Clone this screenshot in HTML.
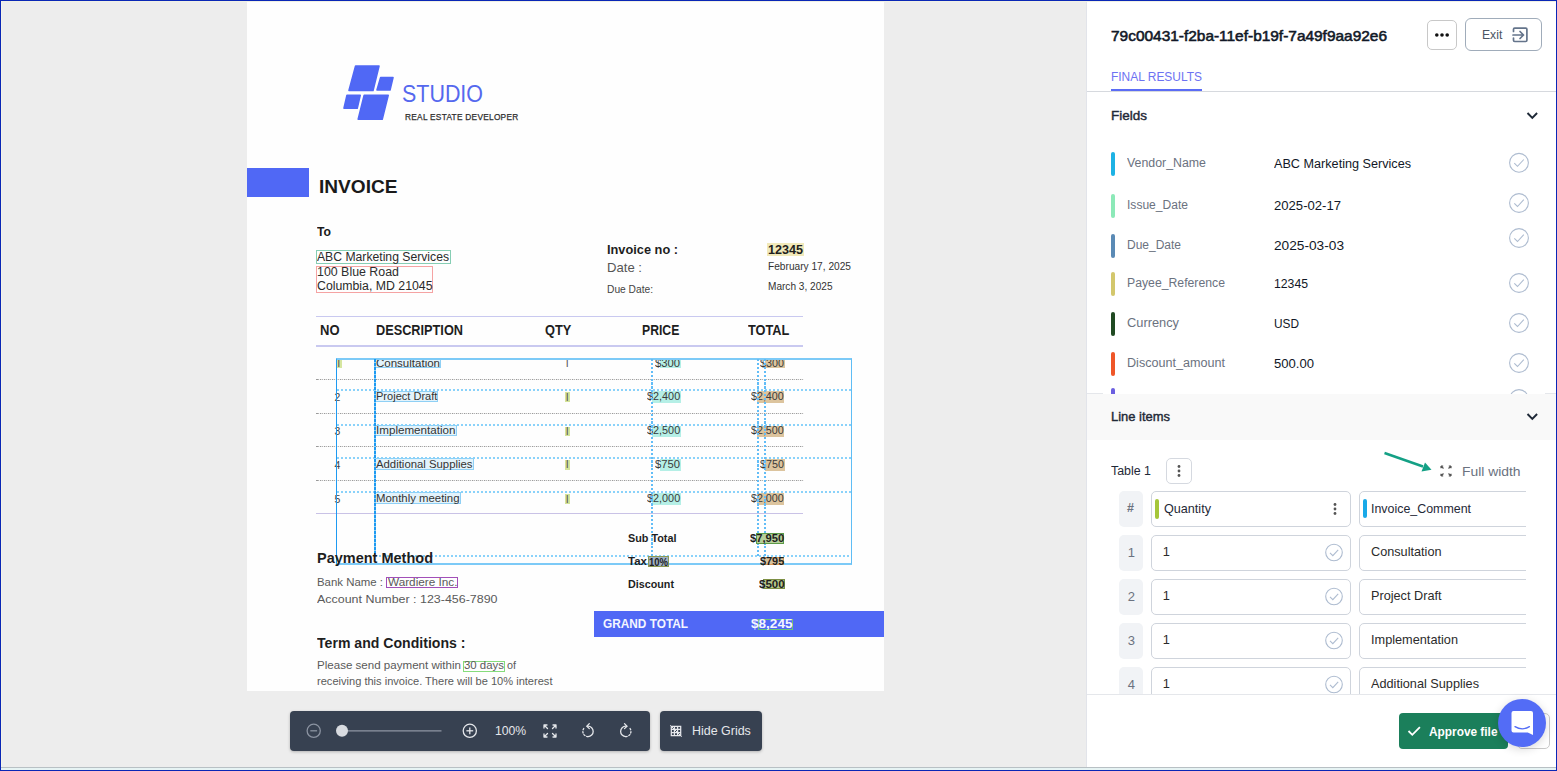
<!DOCTYPE html>
<html><head><meta charset="utf-8"><style>
html,body{margin:0;padding:0;width:1557px;height:771px;overflow:hidden;background:#ededed;font-family:"Liberation Sans",sans-serif;}
.t{position:absolute;white-space:nowrap;line-height:1;}
.r{position:absolute;box-sizing:border-box;}
svg{position:absolute;overflow:visible;}
</style></head><body>
<div class="r" style="left:247px;top:2px;width:637px;height:689px;background:#fefefe"></div>
<svg style="left:0;top:0" width="1557" height="771"><g fill="#5068f5" stroke="#5068f5" stroke-width="1.6" stroke-linejoin="round">
<polygon points="355.6,66 379,66 373,90.5 349,90.5"/>
<polygon points="380.6,77.6 393,77.6 390,90 377,90"/>
<polygon points="347,95.2 360.2,95.2 357.2,108.2 344,108.2"/>
<polygon points="364.2,95.2 388.2,95.2 382.2,119.2 358.2,119.2"/>
</g></svg>
<div id="t0" class="t" style="left:402px;top:81.68px;font-size:24px;color:#5568ee;font-weight:400;transform:scaleX(0.8933);transform-origin:0 0;">STUDIO</div>
<div id="t1" class="t" style="left:404.6px;top:113.05px;font-size:8.8px;color:#2e2e2e;font-weight:400;transform:scaleX(0.9417);transform-origin:0 0;letter-spacing:0.3px;-webkit-text-stroke:0.25px #2e2e2e;">REAL ESTATE DEVELOPER</div>
<div class="r" style="left:247px;top:168px;width:62px;height:29px;background:#5068f5"></div>
<div id="t2" class="t" style="left:319px;top:177.74px;font-size:18.5px;color:#1a1a1a;font-weight:700;transform:scaleX(1.0318);transform-origin:0 0;">INVOICE</div>
<div id="t3" class="t" style="left:317px;top:224.79px;font-size:13px;color:#1a1a1a;font-weight:700;transform:scaleX(0.9382);transform-origin:0 0;">To</div>
<div class="r" style="left:316px;top:250px;width:135px;height:14px;border:1.3px solid #86ceb4"></div>
<div id="t4" class="t" style="left:317px;top:250.59px;font-size:12.3px;color:#2a2a2a;font-weight:400;transform:scaleX(0.9905);transform-origin:0 0;">ABC Marketing Services</div>
<div class="r" style="left:316px;top:266px;width:117px;height:27px;border:1.3px solid #f5a3a3"></div>
<div id="t5" class="t" style="left:317px;top:265.79px;font-size:12.3px;color:#2e2e2e;font-weight:400;transform:scaleX(1.0079);transform-origin:0 0;">100 Blue Road</div>
<div id="t6" class="t" style="left:317px;top:279.59px;font-size:12.3px;color:#2a2a2a;font-weight:400;transform:scaleX(0.9999);transform-origin:0 0;">Columbia, MD 21045</div>
<div id="t7" class="t" style="left:607.2px;top:242.99px;font-size:13px;color:#1e1e1e;font-weight:700;transform:scaleX(0.9829);transform-origin:0 0;">Invoice no :</div>
<div class="r" style="left:767px;top:243px;width:36.5px;height:12.5px;background:#f1e9b9"></div>
<div id="t8" class="t" style="left:767.7px;top:243.84px;font-size:12px;color:#1e1e1e;font-weight:700;transform:scaleX(1.0487);transform-origin:0 0;">12345</div>
<div id="t9" class="t" style="left:607.2px;top:261.49px;font-size:13px;color:#555;font-weight:400;transform:scaleX(1.0090);transform-origin:0 0;">Date :</div>
<div id="t10" class="t" style="left:767.7px;top:260.92px;font-size:11.2px;color:#333;font-weight:400;transform:scaleX(0.9077);transform-origin:0 0;">February 17, 2025</div>
<div id="t11" class="t" style="left:607.2px;top:284.19px;font-size:11px;color:#444;font-weight:400;transform:scaleX(0.9287);transform-origin:0 0;">Due Date:</div>
<div id="t12" class="t" style="left:767.7px;top:280.92px;font-size:11.2px;color:#333;font-weight:400;transform:scaleX(0.9017);transform-origin:0 0;">March 3, 2025</div>
<div class="r" style="left:316px;top:315.5px;width:487px;height:1.6px;background:#c9c9f0"></div>
<div class="r" style="left:316px;top:345.2px;width:487px;height:1.6px;background:#c9c9f0"></div>
<div id="t13" class="t" style="left:320.4px;top:323.35px;font-size:14px;color:#1e1e1e;font-weight:700;transform:scaleX(0.9286);transform-origin:0 0;">NO</div>
<div id="t14" class="t" style="left:375.5px;top:323.35px;font-size:14px;color:#1e1e1e;font-weight:700;transform:scaleX(0.9092);transform-origin:0 0;">DESCRIPTION</div>
<div id="t15" class="t" style="left:544.7px;top:323.35px;font-size:14px;color:#1e1e1e;font-weight:700;transform:scaleX(0.9138);transform-origin:0 0;">QTY</div>
<div id="t16" class="t" style="left:642.3px;top:323.35px;font-size:14px;color:#1e1e1e;font-weight:700;transform:scaleX(0.8716);transform-origin:0 0;">PRICE</div>
<div id="t17" class="t" style="left:748.3px;top:323.35px;font-size:14px;color:#1e1e1e;font-weight:700;transform:scaleX(0.9124);transform-origin:0 0;">TOTAL</div>
<div class="r" style="left:316px;top:379px;width:488px;height:1.4px;background:repeating-linear-gradient(90deg,#9a9a9a 0 1.5px,#e0e0e0 1.5px 2.5px,#b4b4b4 2.5px 3px,#f4f4f4 3px 4px)"></div>
<div class="r" style="left:316px;top:413px;width:488px;height:1.4px;background:repeating-linear-gradient(90deg,#9a9a9a 0 1.5px,#e0e0e0 1.5px 2.5px,#b4b4b4 2.5px 3px,#f4f4f4 3px 4px)"></div>
<div class="r" style="left:316px;top:446px;width:488px;height:1.4px;background:repeating-linear-gradient(90deg,#9a9a9a 0 1.5px,#e0e0e0 1.5px 2.5px,#b4b4b4 2.5px 3px,#f4f4f4 3px 4px)"></div>
<div class="r" style="left:316px;top:479.7px;width:488px;height:1.4px;background:repeating-linear-gradient(90deg,#9a9a9a 0 1.5px,#e0e0e0 1.5px 2.5px,#b4b4b4 2.5px 3px,#f4f4f4 3px 4px)"></div>
<div class="r" style="left:316px;top:512.8px;width:487px;height:1.6px;background:#c9c2e6"></div>
<div class="r" style="left:375px;top:358.4px;width:66px;height:9.600000000000023px;background:#e3f3fb;border:1.5px solid #8fd0f5"></div>
<div id="t18" class="t" style="left:376px;top:357.66px;font-size:11.5px;color:#333;font-weight:400;transform:scaleX(1.0010);transform-origin:0 0;">Consultation</div>
<div class="r" style="left:337px;top:359.9px;width:4.5px;height:8.100000000000023px;background:#d6e6a0"></div>
<div id="t19" class="t" style="left:337.6px;top:358.09px;font-size:11px;color:#555;font-weight:400;">l</div>
<div id="t20" class="t" style="left:566px;top:358.09px;font-size:11px;color:#555;font-weight:400;">l</div>
<div class="r" style="left:660.4px;top:358.9px;width:20.600000000000023px;height:9.600000000000023px;background:#b5efe6"></div>
<div id="t21" class="t" style="left:655px;top:357.66px;font-size:11.5px;color:#3a3a3a;font-weight:400;transform:scaleX(0.9768);transform-origin:0 0;">$300</div>
<div class="r" style="left:765px;top:358.9px;width:19.5px;height:9.600000000000023px;background:#dcc49e"></div>
<div id="t22" class="t" style="left:759.6px;top:357.66px;font-size:11.5px;color:#3a3a3a;font-weight:400;transform:scaleX(0.9338);transform-origin:0 0;">$300</div>
<div class="r" style="left:375px;top:390.8px;width:63.39999999999998px;height:11.699999999999989px;background:#e3f3fb;border:1.5px solid #8fd0f5"></div>
<div id="t23" class="t" style="left:376px;top:391.46px;font-size:11.5px;color:#333;font-weight:400;transform:scaleX(0.9605);transform-origin:0 0;">Project Draft</div>
<div id="t24" class="t" style="left:334.5px;top:392.31px;font-size:10.5px;color:#444;font-weight:400;">2</div>
<div class="r" style="left:565px;top:392.3px;width:4.5px;height:10.199999999999989px;background:#d3e39a"></div>
<div id="t25" class="t" style="left:566px;top:391.89px;font-size:11px;color:#555;font-weight:400;">l</div>
<div class="r" style="left:651.6px;top:391.3px;width:29.399999999999977px;height:11.699999999999989px;background:#b5efe6"></div>
<div id="t26" class="t" style="left:646.8px;top:391.46px;font-size:11.5px;color:#3a3a3a;font-weight:400;transform:scaleX(0.9435);transform-origin:0 0;">$2,400</div>
<div class="r" style="left:757.4px;top:391.3px;width:27.100000000000023px;height:11.699999999999989px;background:#dcc49e"></div>
<div id="t27" class="t" style="left:750.8px;top:391.46px;font-size:11.5px;color:#3a3a3a;font-weight:400;transform:scaleX(0.9293);transform-origin:0 0;">$2,400</div>
<div class="r" style="left:375px;top:425.0px;width:81.5px;height:11.399999999999977px;background:#e3f3fb;border:1.5px solid #8fd0f5"></div>
<div id="t28" class="t" style="left:376px;top:425.36px;font-size:11.5px;color:#333;font-weight:400;transform:scaleX(1.0111);transform-origin:0 0;">Implementation</div>
<div id="t29" class="t" style="left:334.5px;top:426.21px;font-size:10.5px;color:#444;font-weight:400;">3</div>
<div class="r" style="left:565px;top:426.5px;width:4.5px;height:9.899999999999977px;background:#d3e39a"></div>
<div id="t30" class="t" style="left:566px;top:425.79px;font-size:11px;color:#555;font-weight:400;">l</div>
<div class="r" style="left:651.6px;top:425.5px;width:29.399999999999977px;height:11.399999999999977px;background:#b5efe6"></div>
<div id="t31" class="t" style="left:646.8px;top:425.36px;font-size:11.5px;color:#3a3a3a;font-weight:400;transform:scaleX(0.9435);transform-origin:0 0;">$2,500</div>
<div class="r" style="left:757.4px;top:425.5px;width:27.100000000000023px;height:11.399999999999977px;background:#dcc49e"></div>
<div id="t32" class="t" style="left:750.8px;top:425.36px;font-size:11.5px;color:#3a3a3a;font-weight:400;transform:scaleX(0.9293);transform-origin:0 0;">$2,500</div>
<div class="r" style="left:375px;top:458.0px;width:98.5px;height:12.0px;background:#e3f3fb;border:1.5px solid #8fd0f5"></div>
<div id="t33" class="t" style="left:376px;top:458.96px;font-size:11.5px;color:#333;font-weight:400;transform:scaleX(0.9864);transform-origin:0 0;">Additional Supplies</div>
<div id="t34" class="t" style="left:334.5px;top:459.81px;font-size:10.5px;color:#444;font-weight:400;">4</div>
<div class="r" style="left:565px;top:459.5px;width:4.5px;height:10.5px;background:#d3e39a"></div>
<div id="t35" class="t" style="left:566px;top:459.39px;font-size:11px;color:#555;font-weight:400;">l</div>
<div class="r" style="left:660.4px;top:458.5px;width:20.600000000000023px;height:12.0px;background:#b5efe6"></div>
<div id="t36" class="t" style="left:655px;top:458.96px;font-size:11.5px;color:#3a3a3a;font-weight:400;transform:scaleX(0.9768);transform-origin:0 0;">$750</div>
<div class="r" style="left:765px;top:458.5px;width:19.5px;height:12.0px;background:#dcc49e"></div>
<div id="t37" class="t" style="left:759.6px;top:458.96px;font-size:11.5px;color:#3a3a3a;font-weight:400;transform:scaleX(0.9338);transform-origin:0 0;">$750</div>
<div class="r" style="left:375px;top:492.2px;width:85.5px;height:12.100000000000023px;background:#e3f3fb;border:1.5px solid #8fd0f5"></div>
<div id="t38" class="t" style="left:376px;top:493.26px;font-size:11.5px;color:#333;font-weight:400;transform:scaleX(0.9896);transform-origin:0 0;">Monthly meeting</div>
<div id="t39" class="t" style="left:334.5px;top:494.11px;font-size:10.5px;color:#444;font-weight:400;">5</div>
<div class="r" style="left:565px;top:493.7px;width:4.5px;height:10.600000000000023px;background:#d3e39a"></div>
<div id="t40" class="t" style="left:566px;top:493.69px;font-size:11px;color:#555;font-weight:400;">l</div>
<div class="r" style="left:651.6px;top:492.7px;width:29.399999999999977px;height:12.100000000000023px;background:#b5efe6"></div>
<div id="t41" class="t" style="left:646.8px;top:493.26px;font-size:11.5px;color:#3a3a3a;font-weight:400;transform:scaleX(0.9435);transform-origin:0 0;">$2,000</div>
<div class="r" style="left:757.4px;top:492.7px;width:27.100000000000023px;height:12.100000000000023px;background:#dcc49e"></div>
<div id="t42" class="t" style="left:750.8px;top:493.26px;font-size:11.5px;color:#3a3a3a;font-weight:400;transform:scaleX(0.9293);transform-origin:0 0;">$2,000</div>
<div class="r" style="left:336px;top:358px;width:515.5px;height:207.3px;border-top:2px solid #7ccaf7;border-left:1.3px solid #1e9af2;border-right:1.5px solid #5fbdf5;border-bottom:2px solid #7ccaf7"></div>
<div class="r" style="left:337px;top:389px;width:514px;height:2px;background:repeating-linear-gradient(90deg,#8ad2fa 0 2px,transparent 2px 4px)"></div>
<div class="r" style="left:337px;top:424px;width:514px;height:2px;background:repeating-linear-gradient(90deg,#8ad2fa 0 2px,transparent 2px 4px)"></div>
<div class="r" style="left:337px;top:457px;width:514px;height:2px;background:repeating-linear-gradient(90deg,#8ad2fa 0 2px,transparent 2px 4px)"></div>
<div class="r" style="left:337px;top:491px;width:514px;height:2px;background:repeating-linear-gradient(90deg,#8ad2fa 0 2px,transparent 2px 4px)"></div>
<div class="r" style="left:374.5px;top:555px;width:476.5px;height:2px;background:repeating-linear-gradient(90deg,#8ad2fa 0 2px,transparent 2px 4px)"></div>
<div class="r" style="left:374px;top:359px;width:1.5px;height:197px;background:repeating-linear-gradient(180deg,#1e9af2 0 3px,#8fd0f5 3px 4px)"></div>
<div class="r" style="left:651.2px;top:359px;width:1.5px;height:197px;background:repeating-linear-gradient(180deg,#62bdf7 0 2.2px,transparent 2.2px 3.9px)"></div>
<div class="r" style="left:757px;top:359px;width:1.5px;height:197px;background:repeating-linear-gradient(180deg,#62bdf7 0 2.2px,transparent 2.2px 3.9px)"></div>
<div class="r" style="left:764.3px;top:359px;width:1.5px;height:197px;background:repeating-linear-gradient(180deg,#62bdf7 0 2.2px,transparent 2.2px 3.9px)"></div>
<div id="t43" class="t" style="left:628px;top:533.23px;font-size:11.3px;color:#1e1e1e;font-weight:700;transform:scaleX(0.9580);transform-origin:0 0;">Sub Total</div>
<div class="r" style="left:756.4px;top:533px;width:28px;height:10.5px;background:#b6cf9a;border:1px solid #5d9a48"></div>
<div id="t44" class="t" style="left:749.9px;top:533.23px;font-size:11.3px;color:#1e1e1e;font-weight:700;transform:scaleX(0.9924);transform-origin:0 0;">$7,950</div>
<div id="t45" class="t" style="left:628px;top:556.03px;font-size:11.3px;color:#1e1e1e;font-weight:700;transform:scaleX(1.0193);transform-origin:0 0;">Tax</div>
<div class="r" style="left:647.5px;top:556px;width:21.5px;height:10.5px;background:#9fb2c5;border:1px solid #8c9a55"></div>
<div id="t46" class="t" style="left:648.5px;top:556.71px;font-size:10.5px;color:#1e1e1e;font-weight:700;transform:scaleX(0.9041);transform-origin:0 0;">10%</div>
<div class="r" style="left:764.3px;top:556.8px;width:20.2px;height:8.6px;background:#d9c29c;border:1px solid #d99a55"></div>
<div id="t47" class="t" style="left:759.8px;top:556.03px;font-size:11.3px;color:#1e1e1e;font-weight:700;transform:scaleX(0.9626);transform-origin:0 0;">$795</div>
<div id="t48" class="t" style="left:628px;top:578.93px;font-size:11.3px;color:#1e1e1e;font-weight:700;transform:scaleX(0.9518);transform-origin:0 0;">Discount</div>
<div class="r" style="left:762.5px;top:578.5px;width:22px;height:10.5px;background:#b9c98a;border:1px solid #7d8f44"></div>
<div id="t49" class="t" style="left:758.5px;top:578.93px;font-size:11.3px;color:#1e1e1e;font-weight:700;transform:scaleX(1.0222);transform-origin:0 0;">$500</div>
<div class="r" style="left:593.5px;top:611px;width:290.5px;height:25.7px;background:#5068f5"></div>
<div id="t50" class="t" style="left:603.3px;top:618.32px;font-size:12.5px;color:#f4f6ff;font-weight:700;transform:scaleX(0.9464);transform-origin:0 0;">GRAND TOTAL</div>
<div class="r" style="left:757.5px;top:619px;width:35px;height:11px;border:1px solid #69c27a"></div>
<div id="t51" class="t" style="left:751.2px;top:618.32px;font-size:12.5px;color:#f4f6ff;font-weight:700;transform:scaleX(1.0854);transform-origin:0 0;">$8,245</div>
<div id="t52" class="t" style="left:316.9px;top:551.49px;font-size:14.3px;color:#1e1e1e;font-weight:700;transform:scaleX(1.0141);transform-origin:0 0;">Payment Method</div>
<div id="t53" class="t" style="left:316.9px;top:576.66px;font-size:11.5px;color:#5a5a5a;font-weight:400;transform:scaleX(0.9927);transform-origin:0 0;">Bank Name :</div>
<div class="r" style="left:386.4px;top:577px;width:72px;height:10.5px;border:1px solid #a24fb8"></div>
<div id="t54" class="t" style="left:387.5px;top:576.66px;font-size:11.5px;color:#5a5a5a;font-weight:400;transform:scaleX(1.0225);transform-origin:0 0;">Wardiere Inc.</div>
<div id="t55" class="t" style="left:316.9px;top:593.56px;font-size:11.5px;color:#5a5a5a;font-weight:400;transform:scaleX(1.0817);transform-origin:0 0;">Account Number : 123-456-7890</div>
<div id="t56" class="t" style="left:316.9px;top:635.89px;font-size:14.3px;color:#1e1e1e;font-weight:700;transform:scaleX(0.9857);transform-origin:0 0;">Term and Conditions :</div>
<div id="t57" class="t" style="left:316.9px;top:660.06px;font-size:10.8px;color:#5a5a5a;font-weight:400;transform:scaleX(1.0710);transform-origin:0 0;">Please send payment within</div>
<div class="r" style="left:463px;top:661px;width:42px;height:11px;border:1px solid #86dc7c"></div>
<div id="t58" class="t" style="left:464px;top:660.06px;font-size:10.8px;color:#5a5a5a;font-weight:400;transform:scaleX(1.0574);transform-origin:0 0;">30 days</div>
<div id="t59" class="t" style="left:506.5px;top:660.06px;font-size:10.8px;color:#5a5a5a;font-weight:400;transform:scaleX(0.9983);transform-origin:0 0;">of</div>
<div id="t60" class="t" style="left:316.9px;top:675.66px;font-size:10.8px;color:#5a5a5a;font-weight:400;transform:scaleX(1.0254);transform-origin:0 0;">receiving this invoice. There will be 10% interest</div>
<div class="r" style="left:290px;top:711px;width:360px;height:39.5px;background:#374151;border-radius:4px;box-shadow:0 1px 3px rgba(0,0,0,0.25)"></div>
<div class="r" style="left:660px;top:711px;width:102px;height:39.5px;background:#374151;border-radius:4px;box-shadow:0 1px 3px rgba(0,0,0,0.25)"></div>
<svg style="left:0;top:0" width="1557" height="771" fill="none">
<circle cx="313.7" cy="730.8" r="6.6" stroke="#8b93a1" stroke-width="1.3"/>
<line x1="310.3" y1="730.8" x2="317.1" y2="730.8" stroke="#8b93a1" stroke-width="1.3"/>
<line x1="342" y1="730.8" x2="441.5" y2="730.8" stroke="#8f96a3" stroke-width="1.3"/>
<circle cx="342" cy="730.8" r="6" fill="#d8dbe0"/>
<circle cx="469.8" cy="730.8" r="6.6" stroke="#e5e7eb" stroke-width="1.3"/>
<line x1="466.4" y1="730.8" x2="473.2" y2="730.8" stroke="#e5e7eb" stroke-width="1.3"/>
<line x1="469.8" y1="727.4" x2="469.8" y2="734.2" stroke="#e5e7eb" stroke-width="1.3"/>
<g stroke="#e5e7eb" stroke-width="1.3" stroke-linecap="round">
<path d="M544 725 l3.5 3.5 M544 725 h3 M544 725 v3 M556 725 l-3.5 3.5 M556 725 h-3 M556 725 v3 M544 737 l3.5 -3.5 M544 737 h3 M544 737 v-3 M556 737 l-3.5 -3.5 M556 737 h-3 M556 737 v-3"/>
</g>
<g stroke="#e5e7eb" stroke-width="1.3" stroke-linecap="round" fill="none">
<path d="M588 726.2 A5.2 5.2 0 0 1 588 736.6"/>
<path d="M588 736.6 A5.2 5.2 0 0 1 584.2 727.9" stroke-dasharray="1.4 1.8"/>
<path d="M589.3 723.6 l-2.5 2.6 l2.5 2.4"/>
<path d="M625.8 726.2 A5.2 5.2 0 0 0 625.8 736.6"/>
<path d="M625.8 736.6 A5.2 5.2 0 0 0 629.6 727.9" stroke-dasharray="1.4 1.8"/>
<path d="M624.5 723.6 l2.5 2.6 l-2.5 2.4"/>
</g>
<g stroke="#e5e7eb" stroke-width="1.25" fill="none">
<path d="M671.3 726.3 h9.4 v9.4 h-9.4 z M674.4 726.3 v9.4 M677.6 726.3 v9.4 M671.3 729.4 h9.4 M671.3 732.6 h9.4"/>
<path d="M670.3 725.3 l11.4 11.4" stroke-width="1"/>
</g>
</svg>
<div id="t61" class="t" style="left:494.5px;top:724.49px;font-size:13px;color:#e5e7eb;font-weight:400;transform:scaleX(0.9383);transform-origin:0 0;">100%</div>
<div id="t62" class="t" style="left:691.8px;top:724.49px;font-size:13px;color:#e5e7eb;font-weight:400;transform:scaleX(0.9573);transform-origin:0 0;">Hide Grids</div>
<div class="r" style="left:1086px;top:1px;width:1px;height:766px;background:#e2e4ea"></div>
<div class="r" style="left:1087px;top:1px;width:469px;height:766px;background:#fff"></div>
<div id="t63" class="t" style="left:1111.3px;top:28.72px;font-size:14.5px;color:#111827;font-weight:400;transform:scaleX(1.0642);transform-origin:0 0;-webkit-text-stroke:0.55px #111827;">79c00431-f2ba-11ef-b19f-7a49f9aa92e6</div>
<div class="r" style="left:1427px;top:20px;width:30px;height:30px;border:1px solid #c8c8c8;border-radius:5px;background:#fff"></div>
<svg style="left:0;top:0" width="1557" height="771"><g fill="#111"><circle cx="1436.8" cy="35" r="1.8"/><circle cx="1442" cy="35" r="1.8"/><circle cx="1447.2" cy="35" r="1.8"/></g></svg>
<div class="r" style="left:1465px;top:18px;width:77px;height:33px;border:1px solid #a0acba;border-radius:6px;background:#fff"></div>
<div id="t64" class="t" style="left:1481.6px;top:28.76px;font-size:12.8px;color:#4b5563;font-weight:400;transform:scaleX(0.9511);transform-origin:0 0;">Exit</div>
<svg style="left:0;top:0" width="1557" height="771" fill="none"><g stroke="#64748b" stroke-width="1.7" stroke-linecap="round" stroke-linejoin="round">
<path d="M1513.5 31.5 v-2.2 a1.2 1.2 0 0 1 1.2 -1.2 h11 a1.2 1.2 0 0 1 1.2 1.2 v11 a1.2 1.2 0 0 1 -1.2 1.2 h-11 a1.2 1.2 0 0 1 -1.2 -1.2 v-2.2"/>
<path d="M1513 35 h10.5 M1520 31.5 l3.5 3.5 l-3.5 3.5"/>
</g></svg>
<div id="t65" class="t" style="left:1111.3px;top:71.34px;font-size:12px;color:#6d72f2;font-weight:400;transform:scaleX(0.9961);transform-origin:0 0;">FINAL RESULTS</div>
<div class="r" style="left:1111px;top:89px;width:91px;height:2px;background:#5b6cf5"></div>
<div class="r" style="left:1087px;top:91px;width:469px;height:1px;background:#d6d9de"></div>
<div id="t66" class="t" style="left:1111.2px;top:110.16px;font-size:12.8px;color:#1f2937;font-weight:400;transform:scaleX(1.0545);transform-origin:0 0;-webkit-text-stroke:0.4px #1f2937;">Fields</div>
<svg style="left:0;top:0" width="1557" height="771" fill="none"><path d="M1527.5 113 l4.8 5 l4.8 -5" stroke="#1f2937" stroke-width="1.9"/></svg>
<div class="r" style="left:1111px;top:152px;width:4px;height:23.5px;background:#1db2e4;border-radius:2px"></div>
<div id="t67" class="t" style="left:1126.8px;top:156.59px;font-size:12.3px;color:#6b7280;font-weight:400;transform:scaleX(1.0048);transform-origin:0 0;">Vendor_Name</div>
<div id="t68" class="t" style="left:1274.3px;top:157.89px;font-size:12.3px;color:#111827;font-weight:400;transform:scaleX(1.0280);transform-origin:0 0;">ABC Marketing Services</div>
<div class="r" style="left:1111px;top:194px;width:4px;height:23.5px;background:#8ce9b8;border-radius:2px"></div>
<div id="t69" class="t" style="left:1126.8px;top:198.59px;font-size:12.3px;color:#6b7280;font-weight:400;transform:scaleX(0.9804);transform-origin:0 0;">Issue_Date</div>
<div id="t70" class="t" style="left:1274.3px;top:199.89px;font-size:12.3px;color:#111827;font-weight:400;transform:scaleX(1.0651);transform-origin:0 0;">2025-02-17</div>
<div class="r" style="left:1111px;top:234px;width:4px;height:23.5px;background:#5a8ab5;border-radius:2px"></div>
<div id="t71" class="t" style="left:1126.8px;top:238.59px;font-size:12.3px;color:#6b7280;font-weight:400;transform:scaleX(0.9752);transform-origin:0 0;">Due_Date</div>
<div id="t72" class="t" style="left:1274.3px;top:239.89px;font-size:12.3px;color:#111827;font-weight:400;transform:scaleX(1.1128);transform-origin:0 0;">2025-03-03</div>
<div class="r" style="left:1111px;top:272px;width:4px;height:23.5px;background:#d3c76c;border-radius:2px"></div>
<div id="t73" class="t" style="left:1126.8px;top:276.59px;font-size:12.3px;color:#6b7280;font-weight:400;transform:scaleX(0.9954);transform-origin:0 0;">Payee_Reference</div>
<div id="t74" class="t" style="left:1274.3px;top:277.89px;font-size:12.3px;color:#111827;font-weight:400;transform:scaleX(0.9941);transform-origin:0 0;">12345</div>
<div class="r" style="left:1111px;top:312px;width:4px;height:23.5px;background:#204a22;border-radius:2px"></div>
<div id="t75" class="t" style="left:1126.8px;top:316.59px;font-size:12.3px;color:#6b7280;font-weight:400;transform:scaleX(1.0423);transform-origin:0 0;">Currency</div>
<div id="t76" class="t" style="left:1274.3px;top:317.89px;font-size:12.3px;color:#111827;font-weight:400;transform:scaleX(0.9627);transform-origin:0 0;">USD</div>
<div class="r" style="left:1111px;top:352px;width:4px;height:23.5px;background:#ef5628;border-radius:2px"></div>
<div id="t77" class="t" style="left:1126.8px;top:356.59px;font-size:12.3px;color:#6b7280;font-weight:400;transform:scaleX(1.0240);transform-origin:0 0;">Discount_amount</div>
<div id="t78" class="t" style="left:1274.3px;top:357.89px;font-size:12.3px;color:#111827;font-weight:400;transform:scaleX(1.0631);transform-origin:0 0;">500.00</div>
<div class="r" style="left:1111px;top:388px;width:4px;height:8px;background:#6b5fe0;border-radius:2px"></div>
<svg style="left:0;top:0" width="1557" height="771" fill="none"><circle cx="1519" cy="399" r="9.4" stroke="#aebcd0" stroke-width="1.1"/></svg>
<svg style="left:0;top:0" width="1557" height="771" fill="none"><circle cx="1519" cy="162.8" r="9.4" stroke="#aebcd0" stroke-width="1.1"/><path d="M1514.3 163.20000000000002 l3.2 3.1 l6.3 -6.8" stroke="#aebcd0" stroke-width="1.1"/><circle cx="1519" cy="203" r="9.4" stroke="#aebcd0" stroke-width="1.1"/><path d="M1514.3 203.4 l3.2 3.1 l6.3 -6.8" stroke="#aebcd0" stroke-width="1.1"/><circle cx="1519" cy="238" r="9.4" stroke="#aebcd0" stroke-width="1.1"/><path d="M1514.3 238.4 l3.2 3.1 l6.3 -6.8" stroke="#aebcd0" stroke-width="1.1"/><circle cx="1519" cy="283" r="9.4" stroke="#aebcd0" stroke-width="1.1"/><path d="M1514.3 283.4 l3.2 3.1 l6.3 -6.8" stroke="#aebcd0" stroke-width="1.1"/><circle cx="1519" cy="323" r="9.4" stroke="#aebcd0" stroke-width="1.1"/><path d="M1514.3 323.4 l3.2 3.1 l6.3 -6.8" stroke="#aebcd0" stroke-width="1.1"/><circle cx="1519" cy="363" r="9.4" stroke="#aebcd0" stroke-width="1.1"/><path d="M1514.3 363.4 l3.2 3.1 l6.3 -6.8" stroke="#aebcd0" stroke-width="1.1"/></svg>
<div class="r" style="left:1087px;top:393px;width:16px;height:1px;background:#e5e7eb"></div>
<div class="r" style="left:1545px;top:393px;width:11px;height:1px;background:#e5e7eb"></div>
<div class="r" style="left:1087px;top:394px;width:469px;height:46px;background:#f9f9f9"></div>
<div id="t79" class="t" style="left:1111.3px;top:410.49px;font-size:13px;color:#1f2937;font-weight:400;transform:scaleX(0.9958);transform-origin:0 0;-webkit-text-stroke:0.4px #1f2937;">Line items</div>
<svg style="left:0;top:0" width="1557" height="771" fill="none"><path d="M1527.5 414 l4.8 5 l4.8 -5" stroke="#1f2937" stroke-width="1.9"/></svg>
<div id="t80" class="t" style="left:1111.3px;top:464.59px;font-size:12.3px;color:#1f2937;font-weight:400;transform:scaleX(1.0087);transform-origin:0 0;">Table 1</div>
<div class="r" style="left:1166px;top:458px;width:26px;height:26px;border:1px solid #d5d9e0;border-radius:5px;background:#fff"></div>
<svg style="left:0;top:0" width="1557" height="771"><g fill="#555"><circle cx="1179" cy="466.5" r="1.4"/><circle cx="1179" cy="471" r="1.4"/><circle cx="1179" cy="475.5" r="1.4"/></g></svg>
<svg style="left:0;top:0" width="1557" height="771" fill="none">
<line x1="1384.5" y1="453" x2="1423" y2="466.5" stroke="#14a085" stroke-width="2.4"/>
<polygon points="1431.5,469.8 1421.5,471.5 1425,462.6" fill="#14a085"/>
<g stroke="#555" stroke-width="1.2">
<path d="M1441 466 l2.5 2.5 M1441 466 h2.2 M1441 466 v2.2 M1451 466 l-2.5 2.5 M1451 466 h-2.2 M1451 466 v2.2 M1441 476 l2.5 -2.5 M1441 476 h2.2 M1441 476 v-2.2 M1451 476 l-2.5 -2.5 M1451 476 h-2.2 M1451 476 v-2.2"/>
</g></svg>
<div id="t81" class="t" style="left:1461.8px;top:465.09px;font-size:13px;color:#6b7280;font-weight:400;transform:scaleX(1.0670);transform-origin:0 0;">Full width</div>
<div style="position:absolute;left:1087px;top:440px;width:439px;height:254px;overflow:hidden">
<div class="r" style="left:32px;top:51px;width:24px;height:35.5px;background:#f1f3f6;border-radius:5px"></div>
<div class="r" style="left:64px;top:51px;width:199.5px;height:35.5px;border:1px solid #cfd4dc;border-radius:5px;background:#fff"></div>
<div class="r" style="left:272px;top:51px;width:200px;height:35.5px;border:1px solid #cfd4dc;border-radius:5px;background:#fff"></div>
<div id="t82" class="t" style="left:40px;top:62.42px;font-size:12.5px;color:#6b7280;font-weight:700;">#</div>
<div class="r" style="left:68px;top:58.5px;width:4px;height:20px;background:#a5c63a;border-radius:2px"></div>
<div id="t83" class="t" style="left:76.59999999999991px;top:62.29px;font-size:13px;color:#1f2937;font-weight:400;transform:scaleX(0.9706);transform-origin:0 0;">Quantity</div>
<div class="r" style="left:276.20000000000005px;top:58.5px;width:4px;height:19.5px;background:#19a9e8;border-radius:2px"></div>
<div id="t84" class="t" style="left:284.29999999999995px;top:62.29px;font-size:13px;color:#1f2937;font-weight:400;transform:scaleX(0.9544);transform-origin:0 0;">Invoice_Comment</div>
<div class="r" style="left:32px;top:95px;width:24px;height:35.5px;background:#f1f3f6;border-radius:5px"></div>
<div class="r" style="left:64px;top:95px;width:199.5px;height:35.5px;border:1px solid #cfd4dc;border-radius:5px;background:#fff"></div>
<div class="r" style="left:272px;top:95px;width:200px;height:35.5px;border:1px solid #cfd4dc;border-radius:5px;background:#fff"></div>
<div id="t85" class="t" style="left:40.799999999999955px;top:106.49px;font-size:13px;color:#6b7280;font-weight:400;">1</div>
<div id="t86" class="t" style="left:75.70000000000005px;top:106.16px;font-size:12.8px;color:#2b2b2b;font-weight:400;">1</div>
<div id="t87" class="t" style="left:284.29999999999995px;top:106.16px;font-size:12.8px;color:#2b2b2b;font-weight:400;transform:scaleX(0.9910);transform-origin:0 0;">Consultation</div>
<div class="r" style="left:32px;top:139px;width:24px;height:35.5px;background:#f1f3f6;border-radius:5px"></div>
<div class="r" style="left:64px;top:139px;width:199.5px;height:35.5px;border:1px solid #cfd4dc;border-radius:5px;background:#fff"></div>
<div class="r" style="left:272px;top:139px;width:200px;height:35.5px;border:1px solid #cfd4dc;border-radius:5px;background:#fff"></div>
<div id="t88" class="t" style="left:40.799999999999955px;top:150.49px;font-size:13px;color:#6b7280;font-weight:400;">2</div>
<div id="t89" class="t" style="left:75.70000000000005px;top:150.16px;font-size:12.8px;color:#2b2b2b;font-weight:400;">1</div>
<div id="t90" class="t" style="left:284.29999999999995px;top:150.16px;font-size:12.8px;color:#2b2b2b;font-weight:400;transform:scaleX(0.9912);transform-origin:0 0;">Project Draft</div>
<div class="r" style="left:32px;top:183px;width:24px;height:35.5px;background:#f1f3f6;border-radius:5px"></div>
<div class="r" style="left:64px;top:183px;width:199.5px;height:35.5px;border:1px solid #cfd4dc;border-radius:5px;background:#fff"></div>
<div class="r" style="left:272px;top:183px;width:200px;height:35.5px;border:1px solid #cfd4dc;border-radius:5px;background:#fff"></div>
<div id="t91" class="t" style="left:40.799999999999955px;top:194.49px;font-size:13px;color:#6b7280;font-weight:400;">3</div>
<div id="t92" class="t" style="left:75.70000000000005px;top:194.16px;font-size:12.8px;color:#2b2b2b;font-weight:400;">1</div>
<div id="t93" class="t" style="left:284.29999999999995px;top:194.16px;font-size:12.8px;color:#2b2b2b;font-weight:400;transform:scaleX(0.9943);transform-origin:0 0;">Implementation</div>
<div class="r" style="left:32px;top:227px;width:24px;height:35.5px;background:#f1f3f6;border-radius:5px"></div>
<div class="r" style="left:64px;top:227px;width:199.5px;height:35.5px;border:1px solid #cfd4dc;border-radius:5px;background:#fff"></div>
<div class="r" style="left:272px;top:227px;width:200px;height:35.5px;border:1px solid #cfd4dc;border-radius:5px;background:#fff"></div>
<div id="t94" class="t" style="left:40.799999999999955px;top:238.49px;font-size:13px;color:#6b7280;font-weight:400;">4</div>
<div id="t95" class="t" style="left:75.70000000000005px;top:238.16px;font-size:12.8px;color:#2b2b2b;font-weight:400;">1</div>
<div id="t96" class="t" style="left:284.29999999999995px;top:238.16px;font-size:12.8px;color:#2b2b2b;font-weight:400;transform:scaleX(0.9921);transform-origin:0 0;">Additional Supplies</div>
<svg style="left:0;top:0" width="600" height="300" fill="none">
<g fill="#555"><circle cx="248" cy="64.5" r="1.4"/><circle cx="248" cy="69" r="1.4"/><circle cx="248" cy="73.5" r="1.4"/></g>
<circle cx="247" cy="112.5" r="8.3" stroke="#aebcd0" stroke-width="1.1"/><path d="M243 112.9 l2.8 2.7 l5.4 -5.8" stroke="#aebcd0" stroke-width="1.1"/>
<circle cx="247" cy="156.5" r="8.3" stroke="#aebcd0" stroke-width="1.1"/><path d="M243 156.9 l2.8 2.7 l5.4 -5.8" stroke="#aebcd0" stroke-width="1.1"/>
<circle cx="247" cy="200.5" r="8.3" stroke="#aebcd0" stroke-width="1.1"/><path d="M243 200.9 l2.8 2.7 l5.4 -5.8" stroke="#aebcd0" stroke-width="1.1"/>
<circle cx="247" cy="244.5" r="8.3" stroke="#aebcd0" stroke-width="1.1"/><path d="M243 244.9 l2.8 2.7 l5.4 -5.8" stroke="#aebcd0" stroke-width="1.1"/>
</svg>
</div>
<div class="r" style="left:1087px;top:694px;width:469px;height:1px;background:#e5e7eb"></div>
<div class="r" style="left:1516.5px;top:713px;width:33px;height:35.5px;border:1px solid #c9c9c9;border-radius:5px;background:#fff"></div>
<div class="r" style="left:1399px;top:713px;width:109px;height:35.5px;background:#1b7f5b;border-radius:4px"></div>
<svg style="left:0;top:0" width="1557" height="771" fill="none"><path d="M1408.5 731 l3.8 3.8 l7.6 -7.6" stroke="#fff" stroke-width="1.8"/></svg>
<div id="t97" class="t" style="left:1429px;top:724.99px;font-size:13px;color:#ffffff;font-weight:700;transform:scaleX(0.9118);transform-origin:0 0;">Approve file</div>
<div class="r" style="left:1498px;top:699px;width:48px;height:48px;background:#536cf6;border-radius:50%;box-shadow:0 2px 10px rgba(0,0,0,0.16)"></div>
<svg style="left:0;top:0" width="1557" height="771"><path d="M1513.5 711 h17.5 a2 2 0 0 1 2 2 v22 l-5.2 -2.4 h-14.3 a2 2 0 0 1 -2 -2 v-17.6 a2 2 0 0 1 2 -2 z" fill="#fff"/>
<path d="M1515 726.6 q7.2 4.4 14.4 0" stroke="#536cf6" stroke-width="1.3" fill="none" stroke-linecap="round"/></svg>
<div class="r" style="left:1px;top:1px;width:1555px;height:1px;background:#f1f1e4"></div>
<div class="r" style="left:1px;top:1px;width:1px;height:766px;background:#f6f4e8"></div>
<div class="r" style="left:1px;top:767px;width:1555px;height:1px;background:#b8c0c4"></div>
<div class="r" style="left:1px;top:768px;width:1555px;height:2px;background:#e6f3f3"></div>
<div class="r" style="left:0px;top:0px;width:1557px;height:1px;background:#0a27b6"></div>
<div class="r" style="left:0px;top:770px;width:1557px;height:1px;background:#0a27b6"></div>
<div class="r" style="left:0px;top:0px;width:1px;height:771px;background:#0a27b6"></div>
<div class="r" style="left:1556px;top:0px;width:1px;height:771px;background:#0a27b6"></div>
</body></html>
